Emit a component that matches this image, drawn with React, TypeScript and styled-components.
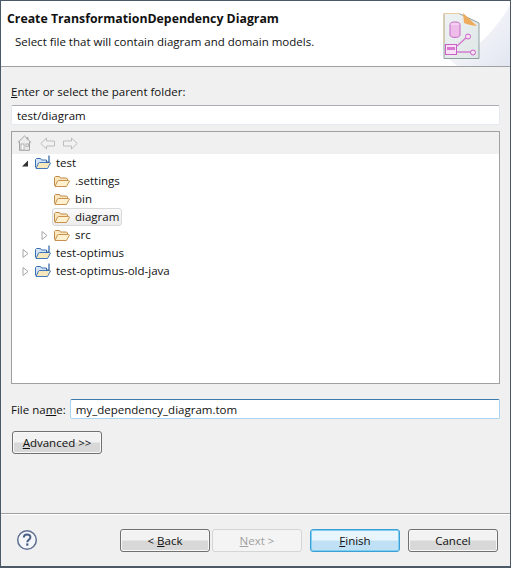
import React from "react";
import styled, { createGlobalStyle } from "styled-components";

const Global = createGlobalStyle`
  html, body { margin: 0; padding: 0; background: #f0f0f0; }
  body { font-family: "Open Sans", "Noto Sans", sans-serif; font-size: 11.5px; color: #111; }
  * { box-sizing: border-box; }
  u { text-underline-offset: 1px; }
`;

const Dialog = styled.div`
  width: 511px;
  height: 568px;
  display: flex;
  flex-direction: column;
  background: #f0f0f0;
  border: 1px solid #4c5a68;
  border-bottom-width: 2px;
`;

const Banner = styled.header`
  height: 66px;
  flex: none;
  background: #fff;
  border-bottom: 1px solid #a0a0a0;
  display: flex;
  justify-content: space-between;
  padding: 0 0 0 6px;
  overflow: hidden;
`;

const BannerText = styled.div`
  padding-top: 9px;
`;

const Title = styled.h1`
  margin: 0;
  font-size: 12.3px;
  font-weight: 700;
  line-height: 18px;
`;

const Subtitle = styled.p`
  margin: 5px 0 0 8px;
  line-height: 17px;
`;

const Body = styled.main`
  flex: 1;
  display: flex;
  flex-direction: column;
  padding: 16px 10px 0 10px;
`;

const FieldLabel = styled.label`
  display: block;
  line-height: 17px;
  margin-bottom: 5px;
`;

const TextInput = styled.div<{ $focused?: boolean }>`
  height: 20px;
  line-height: 19px;
  padding-left: 5px;
  background: #fff;
  border: 1px solid ${(p) => (p.$focused ? "#a9d3ee" : "#e3e9ef")};
  border-top-color: ${(p) => (p.$focused ? "#3d7bad" : "#abadb3")};
  border-radius: 2px;
`;

const TreePanel = styled.div`
  margin-top: 6px;
  height: 253px;
  background: #fff;
  border: 1px solid #a0a0a0;
`;

const TreeToolbar = styled.div`
  height: 22px;
  background: #f0f0f0;
  display: flex;
  align-items: center;
  gap: 8px;
  padding-left: 5px;
`;

const TreeList = styled.ul`
  list-style: none;
  margin: 0;
  padding: 0;
`;

const Row = styled.li<{ $depth: number }>`
  height: 18px;
  display: flex;
  align-items: center;
  padding-left: ${(p) => 9 + p.$depth * 19}px;
`;

const Twisty = styled.span`
  width: 13px;
  height: 13px;
  flex: none;
  display: flex;
  align-items: center;
`;

const NodeLabel = styled.span<{ $selected?: boolean; $project?: boolean }>`
  display: flex;
  align-items: center;
  gap: ${(p) => (p.$project ? 4 : 5)}px;
  height: 18px;
  margin-left: ${(p) => (p.$selected ? "-1px" : "0")};
  padding: ${(p) => (p.$selected ? "0 2px 0 1px" : "0")};
  line-height: 16px;
  border-radius: 3px;
  border: 1px solid ${(p) => (p.$selected ? "#d9d9d9" : "transparent")};
  background: ${(p) => (p.$selected ? "linear-gradient(#fafafa, #ececec)" : "none")};
`;

const FileRow = styled.div`
  margin-top: 15px;
  display: flex;
  align-items: center;
  gap: 4px;
`;

const FileLabel = styled.label`
  line-height: 17px;
`;

const Grow = styled.div`
  flex: 1;
`;

const PushButton = styled.button<{ $primary?: boolean; $width: number }>`
  width: ${(p) => p.$width}px;
  height: 23px;
  padding: 0;
  font: inherit;
  color: ${(p) => (p.disabled ? "#a0a0a0" : "#111")};
  border-radius: 3px;
  border: 1px solid ${(p) => (p.$primary ? "#3c9fd6" : p.disabled ? "#d5d5d5" : "#707070")};
  background: ${(p) =>
    p.$primary
      ? "linear-gradient(#e8f5fc 0 48%, #c0e1f5 52% 100%)"
      : p.disabled
        ? "#f4f4f4"
        : "linear-gradient(#f2f2f2 0 48%, #d8d8d8 52% 100%)"};
  box-shadow: inset 0 0 0 1px ${(p) => (p.$primary ? "#7fd0f0" : p.disabled ? "#f4f4f4" : "#f8f8f8")};
`;

const AdvancedWrap = styled.div`
  margin: 12px 0 0 1px;
`;

const Footer = styled.footer`
  flex: none;
  height: 53px;
  border-top: 1px solid #a0a0a0;
  box-shadow: inset 0 1px 0 #fff;
  display: flex;
  align-items: flex-start;
  padding: 15px 12px 0 15px;
`;

const ButtonGroup = styled.div`
  margin-left: auto;
  display: flex;
  gap: 2px;
`;

const FinishGap = styled.div`
  margin: 0 6px;
`;

const HelpIcon = () => (
  <svg width="22" height="22" viewBox="0 0 22 22">
    <circle cx="11" cy="11" r="9.3" fill="#f4f6fa" stroke="#5f7192" strokeWidth="1.5" />
    <path d="M7.8 8.6c0-4.200 6.600-4.200 6.600-.3 0 2.400-3.100 2.500-3.100 4.900" fill="none" stroke="#4a5f86" strokeWidth="2" />
    <rect x="10.200" y="14.400" width="2.200" height="2.300" fill="#4a5f86" />
  </svg>
);

const FolderIcon = () => (
  <svg width="16" height="16" viewBox="0 0 16 16">
    <path d="M.5 12.500v-8l1-1h4l1 1.500h6l1 1v1.500" fill="#fbe6bd" stroke="#c08a48" strokeLinejoin="round" />
    <path d="M1 13.500h11.500l3-5.500-1-.5H4.500l-1 .5z" fill="#fff0cf" stroke="#c8924e" strokeLinejoin="round" />
  </svg>
);

const ProjectIcon = () => (
  <svg width="17" height="16" viewBox="0 0 17 16">
    <path d="M.5 12.500v-8l1-1h4l1 1.500h5v2" fill="#d5e5f7" stroke="#3a71b5" strokeLinejoin="round" />
    <path d="M1 13.500h11.500l3-5.500-1-.5H4.500l-1 .5z" fill="#f7e7bd" stroke="#4178b9" strokeLinejoin="round" />
    <path d="M14 .5v6.500h-3" fill="none" stroke="#2c5f9f" strokeWidth="1.200" />
  </svg>
);

const Open = () => (
  <svg width="9" height="9" viewBox="0 0 9 9">
    <path d="M7 1.500v6H1z" fill="#333" />
  </svg>
);

const Closed = () => (
  <svg width="9" height="11" viewBox="0 0 9 11">
    <path d="M2 1.500l5 4-5 4z" fill="#fff" stroke="#a6a6a6" />
  </svg>
);

const HomeIcon = () => (
  <svg width="15" height="16" viewBox="0 0 15 16">
    <path d="M.8 7.500L7.500 1l6.700 6.500M2.500 6.500v8.800h10V6.500" fill="#ececec" stroke="#a3a3a3" />
    <rect x="4" y="9" width="3" height="6" fill="#fff" stroke="#b0b0b0" />
    <rect x="9" y="9" width="2.400" height="2.400" fill="#fff" stroke="#b0b0b0" />
    <path d="M10.500 2v2.500" stroke="#a3a3a3" strokeWidth="1.500" />
  </svg>
);

const ArrowIcon = ({ flip }: { flip?: boolean }) => (
  <svg width="15" height="13" viewBox="0 0 15 13" style={flip ? { transform: "scaleX(-1)" } : undefined}>
    <path d="M.8 6.500L6.500 1v3h8v5h-8v3z" fill="#f2f2f2" stroke="#bdbdbd" />
  </svg>
);

// the wizard banner picture: a page with a dog-ear, a database and connected nodes
const WizardArt = () => (
  <svg width="91" height="65" viewBox="0 0 91 65" style={{ flex: "none" }}>
    <defs>
      <linearGradient id="swoosh" x1="0" y1="0" x2="1" y2="1">
        <stop offset="0" stopColor="#fff" />
        <stop offset="1" stopColor="#e2e6f0" />
      </linearGradient>
      <linearGradient id="page" x1="0" y1="0" x2="1" y2="1">
        <stop offset="0" stopColor="#eef2f2" />
        <stop offset="1" stopColor="#dfe6e6" />
      </linearGradient>
    </defs>
    <path d="M30 58C58 52 78 26 91 4V65H38z" fill="url(#swoosh)" />
    <path d="M40 12.500H25v45h35V22z" fill="url(#page)" stroke="#8fa0a0" />
    <path d="M41 12.500H25v30" fill="none" stroke="#e8cda0" />
    <path d="M44 12l14 13-7-1-6-2z" fill="#eeab5c" />
    <ellipse cx="36" cy="23.500" rx="5" ry="2.500" fill="#f6d0f2" stroke="#c66cc4" />
    <path d="M31 24v10c0 3.300 10 3.300 10 0V24" fill="#eebdea" stroke="#c66cc4" />
    <rect x="26.500" y="43.500" width="11" height="10" fill="#f8e0f5" stroke="#c960c6" />
    <rect x="28" y="46" width="8" height="3" fill="#d878d4" />
    <path d="M38 45l10-9M38 51h17" stroke="#d27ccf" strokeWidth="1.500" />
    <circle cx="49" cy="35.500" r="2.500" fill="#f8e0f5" stroke="#c960c6" />
    <circle cx="54" cy="51.500" r="2.500" fill="#f8e0f5" stroke="#c960c6" />
  </svg>
);

const nodes = [
  { id: "test", depth: 0, twisty: "open", project: true },
  { id: ".settings", depth: 1 },
  { id: "bin", depth: 1 },
  { id: "diagram", depth: 1, selected: true },
  { id: "src", depth: 1, twisty: "closed" },
  { id: "test-optimus", depth: 0, twisty: "closed", project: true },
  { id: "test-optimus-old-java", depth: 0, twisty: "closed", project: true },
];

export default function App() {
  return (
    <Dialog>
      <Global />
      <Banner>
        <BannerText>
          <Title>Create TransformationDependency Diagram</Title>
          <Subtitle>Select file that will contain diagram and domain models.</Subtitle>
        </BannerText>
        <WizardArt />
      </Banner>
      <Body>
        <FieldLabel>
          <u>E</u>nter or select the parent folder:
        </FieldLabel>
        <TextInput>test/diagram</TextInput>
        <TreePanel>
          <TreeToolbar>
            <HomeIcon />
            <ArrowIcon />
            <ArrowIcon flip />
          </TreeToolbar>
          <TreeList>
            {nodes.map((n) => (
              <Row key={n.id} $depth={n.depth}>
                <Twisty>
                  {n.twisty === "open" && <Open />}
                  {n.twisty === "closed" && <Closed />}
                </Twisty>
                <NodeLabel $selected={n.selected} $project={n.project}>
                  {n.project ? <ProjectIcon /> : <FolderIcon />}
                  {n.id}
                </NodeLabel>
              </Row>
            ))}
          </TreeList>
        </TreePanel>
        <FileRow>
          <FileLabel>
            File na<u>m</u>e:
          </FileLabel>
          <Grow>
            <TextInput $focused>my_dependency_diagram.tom</TextInput>
          </Grow>
        </FileRow>
        <AdvancedWrap>
          <PushButton $width={90}>
            <u>A</u>dvanced &gt;&gt;
          </PushButton>
        </AdvancedWrap>
      </Body>
      <Footer>
        <HelpIcon />
        <ButtonGroup>
          <PushButton $width={90}>
            &lt; <u>B</u>ack
          </PushButton>
          <PushButton $width={90} disabled>
            <u>N</u>ext &gt;
          </PushButton>
          <FinishGap>
            <PushButton $width={90} $primary>
              <u>F</u>inish
            </PushButton>
          </FinishGap>
          <PushButton $width={90}>Cancel</PushButton>
        </ButtonGroup>
      </Footer>
    </Dialog>
  );
}
